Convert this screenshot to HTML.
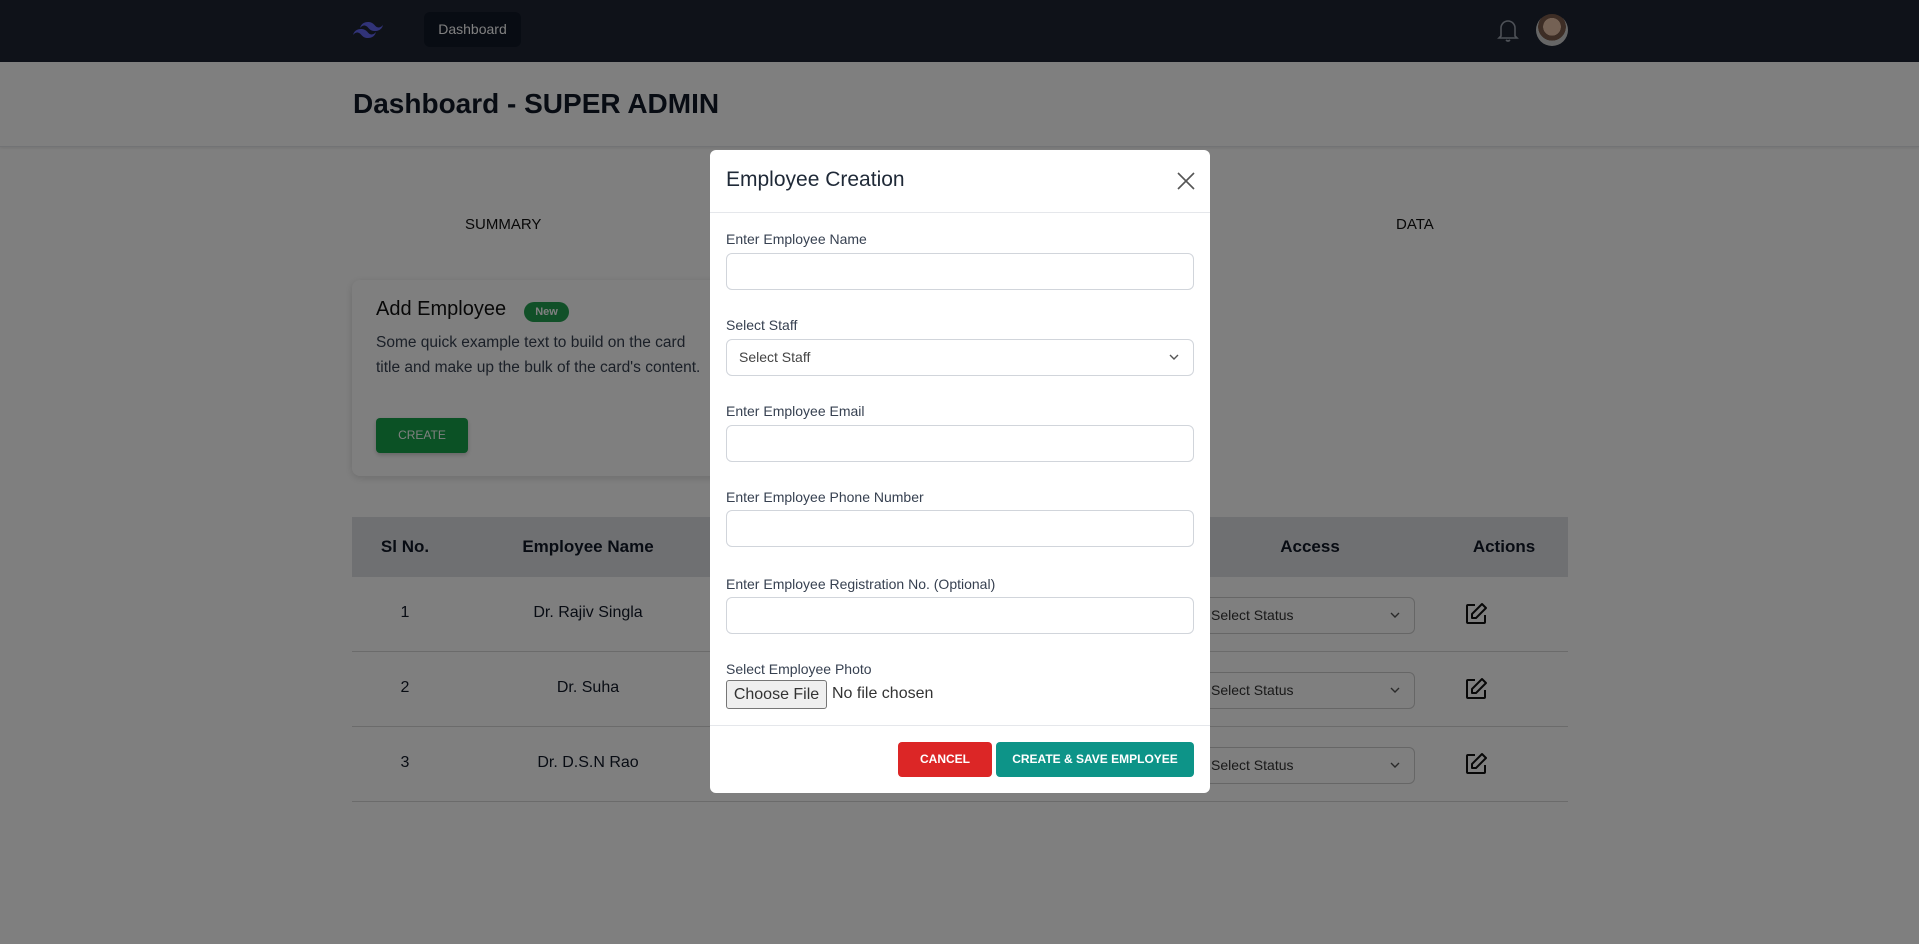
<!DOCTYPE html>
<html><head><meta charset="utf-8"><style>
*{box-sizing:border-box;margin:0;padding:0}
body{width:1919px;height:944px;overflow:hidden;background:#fff;font-family:"Liberation Sans",sans-serif;color:#111827;position:relative}
.abs{position:absolute}
nav{position:absolute;left:0;top:0;width:1919px;height:62px;background:#1e2433}
.pill{left:424px;top:12px;width:97px;height:35px;background:#111827;border-radius:6px;color:#fff;font-size:14px;line-height:35px;text-align:center}
.hdr{left:0;top:62px;width:1919px;height:85px;border-bottom:1px solid #e5e7eb;box-shadow:0 1px 3px rgba(0,0,0,.1)}
h1{position:absolute;left:353px;top:88px;font-size:28px;font-weight:600;color:#111827}
.tab{top:216px;font-size:15px;color:#111}
.card{left:352px;top:280px;width:380px;height:196px;border-radius:8px;box-shadow:0 2px 8px rgba(0,0,0,.15);background:#fff}
.table{left:352px;top:517px;width:1216px}
.th{position:absolute;top:0;height:60px;background:#dfe1e5;width:1216px}
.row{position:absolute;left:0;width:1216px;height:75px;border-bottom:1px solid #d6d6d6}
.c{position:absolute;transform:translateX(-50%);font-size:16px;white-space:nowrap}
.sel{position:absolute;left:848px;width:215px;height:37px;border:1px solid #ccc;border-radius:6px;font-size:14px;padding-left:10px;line-height:35px;color:#333}
.ov{left:0;top:0;width:1919px;height:944px;background:rgba(0,0,0,.5)}
.modal{left:710px;top:150px;width:500px;height:643px;background:#fff;border-radius:6px}
.lbl{position:absolute;left:16px;font-size:14px;color:#374151}
.inp{position:absolute;left:16px;width:468px;height:37px;border:1px solid #d1d5db;border-radius:6px}
.chev{position:absolute;right:14px;top:14px}
</style></head><body>
<nav>
<svg class="abs" style="left:352px;top:20px" width="32" height="20" viewBox="0 0 32 20"><path d="M8 8c1-4 4-6 8-6 6 0 6.5 4.5 9.5 5.3 2 .5 3.8-.3 5.5-2.3-1 4-4 6-8 6-6 0-6.5-4.5-9.5-5.3C11.5 5.2 9.7 6 8 8zM1 15c1-4 4-6 8-6 6 0 6.5 4.5 9.5 5.3 2 .5 3.8-.3 5.5-2.3-1 4-4 6-8 6-6 0-6.5-4.5-9.5-5.3C4.5 12.2 2.7 13 1 15z" fill="#6366f1"/></svg>
<div class="abs pill">Dashboard</div>
<svg class="abs" style="left:1497px;top:17px" width="22" height="26" viewBox="0 0 22 26" fill="none" stroke="#9ca3af" stroke-width="1.6"><path d="M4 19V11a7 7 0 0114 0v8l2 2H2z"/><path d="M9 23q2 2 4 0"/></svg>
<div class="abs" style="left:1536px;top:14px;width:32px;height:32px;border-radius:50%;background:radial-gradient(circle at 50% 40%,#e8c3a8 0 35%,#7a5b4a 36% 55%,#ccc 56%)"></div>
</nav>
<div class="abs hdr"></div>
<h1>Dashboard - SUPER ADMIN</h1>
<div class="abs tab" style="left:465px">SUMMARY</div>
<div class="abs tab" style="left:1396px">DATA</div>
<div class="abs card">
<div class="abs" style="left:24px;top:18px;font-size:20px;color:#111">Add Employee</div>
<div class="abs" style="left:172px;top:22px;width:45px;height:20px;border-radius:10px;background:#22a050;color:#fff;font-size:11px;font-weight:bold;text-align:center;line-height:20px">New</div>
<div class="abs" style="left:24px;top:50px;width:330px;font-size:15.5px;line-height:25px;color:#374151">Some quick example text to build on the card title and make up the bulk of the card's content.</div>
<div class="abs" style="left:24px;top:138px;width:92px;height:35px;background:#16a34a;border-radius:4px;color:#fff;font-size:12px;text-align:center;line-height:35px;box-shadow:0 2px 4px rgba(0,0,0,.2)">CREATE</div>
</div>
<div class="abs table">
<div class="th"><span class="c" style="left:53px;top:20px;font-weight:600;font-size:17px">Sl No.</span><span class="c" style="left:236px;top:20px;font-weight:600;font-size:17px">Employee Name</span><span class="c" style="left:958px;top:20px;font-weight:600;font-size:17px">Access</span><span class="c" style="left:1152px;top:20px;font-weight:600;font-size:17px">Actions</span></div>
<div class="row" style="top:60px"><span class="c" style="left:53px;top:27px">1</span><span class="c" style="left:236px;top:27px">Dr. Rajiv Singla</span><div class="sel" style="top:20px">Select Status<svg class="chev" width="10" height="7" viewBox="0 0 10 7" fill="none" stroke="#555" stroke-width="1.4"><path d="M1 1l4 4 4-4"/></svg></div><svg class="abs" style="left:1112px;top:25px" width="24" height="24" viewBox="0 0 24 24" fill="none" stroke="#111" stroke-width="2" stroke-linejoin="round"><path d="M11 3H4a1 1 0 00-1 1v16a1 1 0 001 1h16a1 1 0 001-1v-7"/><path d="M18 2l4 4-10 10H8v-4z"/></svg></div>
<div class="row" style="top:135px"><span class="c" style="left:53px;top:27px">2</span><span class="c" style="left:236px;top:27px">Dr. Suha</span><div class="sel" style="top:20px">Select Status<svg class="chev" width="10" height="7" viewBox="0 0 10 7" fill="none" stroke="#555" stroke-width="1.4"><path d="M1 1l4 4 4-4"/></svg></div><svg class="abs" style="left:1112px;top:25px" width="24" height="24" viewBox="0 0 24 24" fill="none" stroke="#111" stroke-width="2" stroke-linejoin="round"><path d="M11 3H4a1 1 0 00-1 1v16a1 1 0 001 1h16a1 1 0 001-1v-7"/><path d="M18 2l4 4-10 10H8v-4z"/></svg></div>
<div class="row" style="top:210px"><span class="c" style="left:53px;top:27px">3</span><span class="c" style="left:236px;top:27px">Dr. D.S.N Rao</span><div class="sel" style="top:20px">Select Status<svg class="chev" width="10" height="7" viewBox="0 0 10 7" fill="none" stroke="#555" stroke-width="1.4"><path d="M1 1l4 4 4-4"/></svg></div><svg class="abs" style="left:1112px;top:25px" width="24" height="24" viewBox="0 0 24 24" fill="none" stroke="#111" stroke-width="2" stroke-linejoin="round"><path d="M11 3H4a1 1 0 00-1 1v16a1 1 0 001 1h16a1 1 0 001-1v-7"/><path d="M18 2l4 4-10 10H8v-4z"/></svg></div>
</div>
<div class="abs ov"></div>
<div class="abs modal">
<div class="abs" style="left:16px;top:18px;font-size:21px;color:#1f2937">Employee Creation</div>
<svg class="abs" style="left:467px;top:22px" width="18" height="18" viewBox="0 0 18 18" stroke="#555" stroke-width="1.6"><path d="M1 1l16 16M17 1L1 17"/></svg>
<div class="abs" style="left:0;top:62px;width:500px;border-top:1px solid #e5e7eb"></div>
<div class="lbl" style="top:81px">Enter Employee Name</div><div class="inp" style="top:103px"></div>
<div class="lbl" style="top:167px">Select Staff</div><div class="inp" style="top:189px;font-size:14px;color:#444;padding-left:12px;line-height:35px">Select Staff<svg class="chev" width="10" height="7" viewBox="0 0 10 7" fill="none" stroke="#555" stroke-width="1.4"><path d="M1 1l4 4 4-4"/></svg></div>
<div class="lbl" style="top:253px">Enter Employee Email</div><div class="inp" style="top:275px"></div>
<div class="lbl" style="top:339px">Enter Employee Phone Number</div><div class="inp" style="top:360px"></div>
<div class="lbl" style="top:426px">Enter Employee Registration No. (Optional)</div><div class="inp" style="top:447px"></div>
<div class="lbl" style="top:511px">Select Employee Photo</div>
<div class="abs" style="left:16px;top:530px;width:101px;height:29px;border:1px solid #767676;border-radius:3px;background:#efefef;font-size:16px;color:#333;text-align:center;line-height:27px">Choose File</div>
<div class="abs" style="left:122px;top:535px;font-size:16px;color:#333">No file chosen</div>
<div class="abs" style="left:0;top:575px;width:500px;border-top:1px solid #e5e7eb"></div>
<div class="abs" style="left:188px;top:592px;width:94px;height:35px;background:#dc2626;border-radius:4px;color:#fff;font-size:12px;font-weight:bold;text-align:center;line-height:35px">CANCEL</div>
<div class="abs" style="left:286px;top:592px;width:198px;height:35px;background:#0d9488;border-radius:4px;color:#fff;font-size:12px;font-weight:bold;text-align:center;line-height:35px">CREATE &amp; SAVE EMPLOYEE</div>
</div>
</body></html>
